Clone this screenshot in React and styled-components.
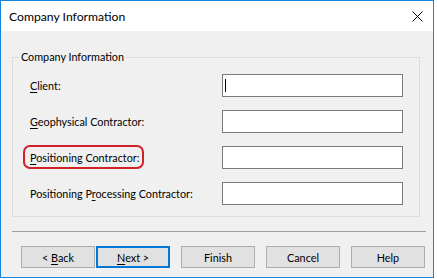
import styled, { createGlobalStyle } from 'styled-components';

const GlobalStyle = createGlobalStyle`
  html, body {
    margin: 0;
    padding: 0;
    background: #ffffff;
  }
  body {
    font-family: Lato, 'Liberation Sans', Arial, sans-serif;
    font-size: 10.8px;
    color: #000;
  }
`;

const Window = styled.div`
  box-sizing: border-box;
  width: 434px;
  height: 278px;
  border: 1px solid #1883d7;
  display: flex;
  flex-direction: column;
  background: #f0f0f0;
`;

const TitleBar = styled.div`
  height: 30px;
  flex: 0 0 30px;
  background: #ffffff;
  display: flex;
  align-items: center;
  justify-content: space-between;
  padding: 0 10px 0 8px;
  font-size: 12.2px;
`;

const CloseIcon = () => (
  <svg width="11" height="11" viewBox="0 0 11 11">
    <path d="M0.5 0.5 L10.5 10.5 M10.5 0.5 L0.5 10.5" stroke="#000" strokeWidth="1" />
  </svg>
);

const Body = styled.div`
  flex: 1;
  display: flex;
  flex-direction: column;
  padding: 18px 13px 0 11px;
`;

const GroupBox = styled.fieldset`
  margin: 0;
  border: 1px solid #dcdcdc;
  padding: 9px 16px 11px 17px;
  display: grid;
  grid-template-columns: 1fr 181px;
  row-gap: 13px;
  align-items: center;
  min-width: 0;
`;

const Legend = styled.legend`
  padding: 0 2px;
  margin-left: -11px;
  font-size: 10.8px;
  line-height: 16px;
`;

const Label = styled.span`
  position: relative;
  justify-self: start;
  white-space: nowrap;

  ${({ $marked }) =>
    $marked &&
    `
    &::after {
      content: '';
      position: absolute;
      left: -7px;
      right: -5px;
      top: -6px;
      bottom: -5px;
      border: 2px solid #d0202a;
      border-radius: 7px;
    }
  `}
`;

const Key = styled.span`
  text-decoration: underline;
  text-underline-offset: 2px;
`;

const TextBox = styled.div`
  box-sizing: border-box;
  height: 23px;
  background: #ffffff;
  border: 1px solid #7a7a7a;
  display: flex;
  align-items: center;
  padding-left: 2px;
`;

const Caret = styled.span`
  width: 1px;
  height: 13px;
  background: #000;
`;

const Separator = styled.div`
  margin: 14px -6px 0 0;
  height: 1px;
  background: #a0a0a0;
`;

const ButtonRow = styled.div`
  display: flex;
  margin: 14px -7px 0 9px;
  gap: 11px;
`;

const ButtonPair = styled.div`
  display: flex;
  gap: 1px;
`;

const Button = styled.button`
  box-sizing: border-box;
  width: 74px;
  height: 22px;
  margin: 0;
  padding: 0;
  background: #e1e1e1;
  border: ${({ $default }) => ($default ? '2px solid #0078d7' : '1px solid #adadad')};
  font-family: inherit;
  font-size: 10.8px;
  color: #000;
  display: flex;
  align-items: center;
  justify-content: center;
`;

export default function App() {
  return (
    <>
      <GlobalStyle />
      <Window>
        <TitleBar>
          <span>Company Information</span>
          <CloseIcon />
        </TitleBar>
        <Body>
          <GroupBox>
            <Legend>Company Information</Legend>
            <Label>
              <Key>C</Key>lient:
            </Label>
            <TextBox>
              <Caret />
            </TextBox>
            <Label>
              <Key>G</Key>eophysical Contractor:
            </Label>
            <TextBox />
            <Label $marked>
              <Key>P</Key>ositioning Contractor:
            </Label>
            <TextBox />
            <Label>
              Positioning P<Key>r</Key>ocessing Contractor:
            </Label>
            <TextBox />
          </GroupBox>
          <Separator />
          <ButtonRow>
            <ButtonPair>
              <Button>
                &lt;&nbsp;<Key>B</Key>ack
              </Button>
              <Button $default>
                <Key>N</Key>ext &gt;
              </Button>
            </ButtonPair>
            <Button>Finish</Button>
            <Button>Cancel</Button>
            <Button>Help</Button>
          </ButtonRow>
        </Body>
      </Window>
    </>
  );
}
